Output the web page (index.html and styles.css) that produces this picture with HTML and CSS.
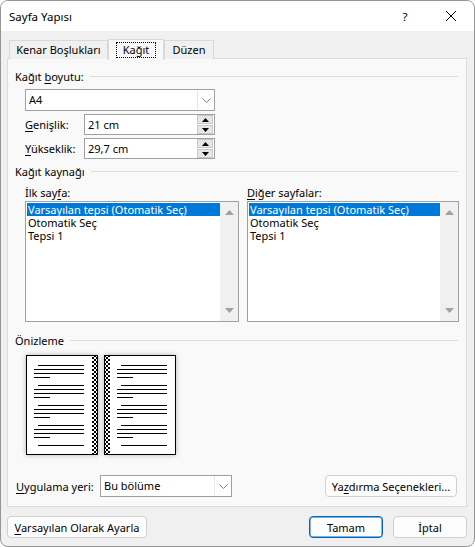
FILE: index.html
```html
<!DOCTYPE html>
<html lang="tr">
<head>
<meta charset="utf-8">
<title>Sayfa Yapısı</title>
<link rel="stylesheet" href="styles.css">
</head>
<body>
<div class="dialog">
  <div class="titlebar">
    <span class="title">Sayfa Yapısı</span>
    <span class="help">?</span>
    <svg class="close" width="12" height="12" viewBox="0 0 12 12"><path d="M1 1L11 11M11 1L1 11" stroke="#000" stroke-width="1"/></svg>
  </div>
  <div class="tabs">
    <div class="tab">Kenar Boşlukları</div>
    <div class="tab active"><span class="focus">Kağıt</span></div>
    <div class="tab">Düzen</div>
  </div>
  <div class="panel">
    <div class="section"><span>Kağıt <u>b</u>oyutu:</span><i></i></div>
    <div class="combo size">
      <span class="val">A4</span>
      <span class="drop"><svg width="9" height="5" viewBox="0 0 9 5"><path d="M0.5 0.5L4.5 4.5L8.5 0.5" fill="none" stroke="#808080" stroke-width="1"/></svg></span>
    </div>
    <div class="frow">
      <span class="flabel"><u>G</u>enişlik:</span>
      <div class="spin"><span class="val">21 cm</span>
        <span class="btns"><span class="sb"><svg width="7" height="4" viewBox="0 0 7 4"><path d="M3.5 0L7 4H0Z" fill="#000"/></svg></span><span class="sb"><svg width="7" height="4" viewBox="0 0 7 4"><path d="M0 0H7L3.5 4Z" fill="#000"/></svg></span></span>
      </div>
    </div>
    <div class="frow">
      <span class="flabel"><u>Y</u>ükseklik:</span>
      <div class="spin"><span class="val">29,7 cm</span>
        <span class="btns"><span class="sb"><svg width="7" height="4" viewBox="0 0 7 4"><path d="M3.5 0L7 4H0Z" fill="#000"/></svg></span><span class="sb"><svg width="7" height="4" viewBox="0 0 7 4"><path d="M0 0H7L3.5 4Z" fill="#000"/></svg></span></span>
      </div>
    </div>
    <div class="section s2"><span>Kağıt kaynağı</span><i></i></div>
    <div class="lists">
      <div class="col left">
        <div class="llabel">İlk say<u>f</u>a:</div>
        <div class="listbox">
          <div class="items">
            <div class="item sel">Varsayılan tepsi (Otomatik Seç)</div>
            <div class="item">Otomatik Seç</div>
            <div class="item">Tepsi 1</div>
          </div>
          <div class="scroll">
            <svg width="9" height="5" viewBox="0 0 9 5"><path d="M4.5 0L9 5H0Z" fill="#a0a0a0"/></svg>
            <svg width="9" height="5" viewBox="0 0 9 5"><path d="M0 0H9L4.5 5Z" fill="#a0a0a0"/></svg>
          </div>
        </div>
      </div>
      <div class="col right">
        <div class="llabel"><u>D</u>iğer sayfalar:</div>
        <div class="listbox">
          <div class="items">
            <div class="item sel">Varsayılan tepsi (Otomatik Seç)</div>
            <div class="item">Otomatik Seç</div>
            <div class="item">Tepsi 1</div>
          </div>
          <div class="scroll">
            <svg width="9" height="5" viewBox="0 0 9 5"><path d="M4.5 0L9 5H0Z" fill="#a0a0a0"/></svg>
            <svg width="9" height="5" viewBox="0 0 9 5"><path d="M0 0H9L4.5 5Z" fill="#a0a0a0"/></svg>
          </div>
        </div>
      </div>
    </div>
    <div class="section s3"><span>Önizleme</span><i></i></div>
    <div class="preview">
      <svg class="page" width="72" height="100" viewBox="0 0 72 100">
        <defs>
          <pattern id="chk" width="4" height="4" patternUnits="userSpaceOnUse">
            <rect width="4" height="4" fill="#fff"/><rect width="2" height="2" fill="#000"/><rect x="2" y="2" width="2" height="2" fill="#000"/>
          </pattern>
        </defs>
        <rect x="0.5" y="0.5" width="71" height="99" fill="#fff" stroke="#000"/>
        <rect x="66" y="1" width="5" height="98" fill="url(#chk)"/>
        <g fill="#000">
          <rect x="12" y="10" width="46" height="1"/><rect x="8" y="14" width="50" height="1"/><rect x="8" y="18" width="50" height="1"/><rect x="8" y="22" width="16" height="1"/>
          <rect x="12" y="30" width="46" height="1"/><rect x="8" y="34" width="50" height="1"/><rect x="8" y="38" width="50" height="1"/><rect x="8" y="42" width="16" height="1"/>
          <rect x="12" y="50" width="46" height="1"/><rect x="8" y="54" width="50" height="1"/><rect x="8" y="58" width="50" height="1"/><rect x="8" y="62" width="16" height="1"/>
          <rect x="12" y="70" width="46" height="1"/><rect x="8" y="74" width="50" height="1"/><rect x="8" y="78" width="50" height="1"/><rect x="8" y="82" width="16" height="1"/>
          <rect x="12" y="90" width="46" height="1"/>
        </g>
      </svg>
      <svg class="page" width="72" height="100" viewBox="0 0 72 100">
        <defs>
          <pattern id="chk2" width="4" height="4" patternUnits="userSpaceOnUse">
            <rect width="4" height="4" fill="#fff"/><rect width="2" height="2" fill="#000"/><rect x="2" y="2" width="2" height="2" fill="#000"/>
          </pattern>
        </defs>
        <rect x="0.5" y="0.5" width="71" height="99" fill="#fff" stroke="#000"/>
        <rect x="1" y="1" width="5" height="98" fill="url(#chk2)"/>
        <g fill="#000">
          <rect x="17" y="10" width="46" height="1"/><rect x="13" y="14" width="50" height="1"/><rect x="13" y="18" width="50" height="1"/><rect x="13" y="22" width="16" height="1"/>
          <rect x="17" y="30" width="46" height="1"/><rect x="13" y="34" width="50" height="1"/><rect x="13" y="38" width="50" height="1"/><rect x="13" y="42" width="16" height="1"/>
          <rect x="17" y="50" width="46" height="1"/><rect x="13" y="54" width="50" height="1"/><rect x="13" y="58" width="50" height="1"/><rect x="13" y="62" width="16" height="1"/>
          <rect x="17" y="70" width="46" height="1"/><rect x="13" y="74" width="50" height="1"/><rect x="13" y="78" width="50" height="1"/><rect x="13" y="82" width="16" height="1"/>
          <rect x="17" y="90" width="46" height="1"/>
        </g>
      </svg>
    </div>
    <div class="apply">
      <span class="alabel"><u>U</u>ygulama yeri:</span>
      <div class="combo applyc">
        <span class="val">Bu bölüme</span>
        <span class="drop"><svg width="9" height="5" viewBox="0 0 9 5"><path d="M0.5 0.5L4.5 4.5L8.5 0.5" fill="none" stroke="#808080" stroke-width="1"/></svg></span>
      </div>
      <span class="grow"></span>
      <button class="btn print">Ya<u>z</u>dırma Seçenekleri...</button>
    </div>
  </div>
  <div class="footer">
    <button class="btn def"><u>V</u>arsayılan Olarak Ayarla</button>
    <span class="grow"></span>
    <button class="btn ok">Tamam</button>
    <button class="btn cancel">İptal</button>
  </div>
</div>
</body>
</html>
```
FILE: styles.css
```css
* { box-sizing: border-box; }
html, body { margin: 0; padding: 0; background: #fff; }
body { font-family: "Noto Sans", "Open Sans", sans-serif; font-size: 11px; color: #000; }
u { text-decoration: underline; text-underline-offset: 2px; text-decoration-thickness: 1px; }

.dialog {
  width: 475px; height: 547px;
  border: 1px solid #959595; border-radius: 8px;
  background: #f0f0f0; overflow: hidden;
  display: flex; flex-direction: column;
}
.titlebar {
  height: 30px; flex: none; background: #fff;
  display: flex; align-items: center; padding-left: 8px;
}
.title { flex: 1; font-size: 11.5px; }
.help { width: 12px; text-align: center; margin-right: 34px; font-size: 11.5px; }
.close { margin-right: 17px; }

.tabs {
  height: 21px; margin-top: 7px; margin-left: 7px;
  display: flex; align-items: flex-end; position: relative; z-index: 2;
}
.tab {
  height: 19px; padding: 0; line-height: 17px; flex: none;
  border: 1px solid #d9d9d9; border-bottom: none; background: #f0f0f0;
  white-space: nowrap; text-align: center;
}
.tab:first-child { width: 99px; margin-left: 1px; }
.tab.active {
  height: 21px; width: 56px; background: #f9f9f9;
  border-color: #d9d9d9; margin-bottom: -1px; line-height: 19px;
  display: flex; align-items: center; justify-content: center;
}
.tab.active .focus { border: 1px dotted #000; padding: 0 6px; line-height: 14px; }
.tab:last-child { width: 50px; }

.panel {
  margin-left: 6px; width: 460px; height: 449px; margin-top: -1px; flex: none;
  border: 1px solid #dcdcdc; background: #f9f9f9;
  padding: 10px 8px 0 7px;
  display: flex; flex-direction: column;
}
.section { display: flex; align-items: center; height: 15px; gap: 6px; line-height: 15px; white-space: nowrap; }
.section i { flex: 1; height: 1px; background: #dcdcdc; }
.section.s2 { margin-top: 5px; }
.section.s3 { margin-top: 11px; }

.combo {
  height: 22px; background: #fff; border: 1px solid #a0a0a0; flex: none;
  display: flex; align-items: center;
}
.combo .val { flex: 1; padding-left: 3px; line-height: 18px; white-space: nowrap; }
.combo .drop {
  width: 17px; height: 20px; border-left: 1px solid #e6e6e6;
  display: flex; align-items: center; justify-content: center;
}
.combo.size { margin-top: 5px; margin-left: 10px; width: 190px; }

.frow { display: flex; align-items: center; margin-top: 3px; margin-left: 10px; height: 21px; }
.flabel { width: 59px; flex: none; white-space: nowrap; }
.spin {
  width: 131px; height: 21px; background: #fff; border: 1px solid #a0a0a0; flex: none;
  display: flex; align-items: center;
}
.spin .val { flex: 1; padding-left: 3px; }
.btns { display: flex; flex-direction: column; width: 16px; margin-right: 1px; gap: 1px; }
.sb {
  height: 9px; background: #e6e6e6; border: 1px solid #c8c8c8;
  display: flex; align-items: center; justify-content: center;
}

.lists { display: flex; margin-left: 10px; margin-top: 6px; gap: 8px; }
.col { flex: none; }
.col.left { width: 214px; }
.col.right { width: 212px; }
.llabel { height: 16px; line-height: 15px; white-space: nowrap; }
.listbox {
  height: 121px; background: #fff; border: 1px solid #a0a0a0;
  display: flex; padding: 1px 0 0 1px;
}
.items { flex: 1; }
.item { height: 13px; line-height: 13px; padding-left: 1px; white-space: nowrap; }
.item.sel { background: #0078d7; color: #fff; }
.scroll {
  width: 18px; margin-top: -1px; background: #f0f0f0;
  display: flex; flex-direction: column; align-items: center; justify-content: space-between;
  padding: 8px 0 8px;
}

.preview { display: flex; gap: 6px; margin-top: 7px; margin-left: 11px; height: 100px; }
.page { display: block; flex: none; box-shadow: 0 0 5px rgba(0,0,0,0.28); }

.apply { display: flex; align-items: center; margin-top: 20px; height: 22px; padding-right: 1px; }
.alabel { width: 85px; flex: none; padding-left: 1px; white-space: nowrap; }
.combo.applyc { width: 132px; }
.grow { flex: 1; }

.btn {
  font-family: inherit; font-size: 11px; color: #000;
  height: 22px; background: #fdfdfd; flex: none;
  border: 1px solid #d0d0d0; border-radius: 4px;
  padding: 0; cursor: default; white-space: nowrap;
}
.btn.print { width: 132px; }
.footer { display: flex; margin-top: 9px; padding: 0 7px 0 6px; gap: 10px; }
.btn.def { width: 140px; }
.btn.ok { width: 74px; border: 1px solid #0067c0; box-shadow: inset 0 0 0 0.5px #0067c0; }
.btn.cancel { width: 74px; }
```
